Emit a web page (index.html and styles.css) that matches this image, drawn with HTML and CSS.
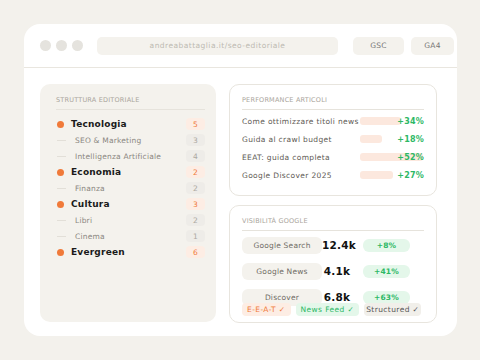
FILE: index.html
```html
<!DOCTYPE html>
<html>
<head>
<meta charset="utf-8">
<link rel="stylesheet" href="styles.css">
</head>
<body>
<div class="window">
  <div class="topbar">
    <div class="dots"><span class="dot"></span><span class="dot"></span><span class="dot"></span></div>
    <div class="url">andreabattaglia.it/seo-editoriale</div>
    <div class="btn btn-gsc">GSC</div>
    <div class="btn btn-ga4">GA4</div>
  </div>
  <div class="content">
    <div class="panel-left">
      <div class="label">STRUTTURA EDITORIALE</div>
      <div class="tree">
        <div class="row main"><span class="bullet"></span><span class="name">Tecnologia</span><span class="count hot">5</span></div>
        <div class="row sub"><span class="dash"></span><span class="name">SEO &amp; Marketing</span><span class="count">3</span></div>
        <div class="row sub"><span class="dash"></span><span class="name">Intelligenza Artificiale</span><span class="count">4</span></div>
        <div class="row main"><span class="bullet"></span><span class="name">Economia</span><span class="count hot">2</span></div>
        <div class="row sub"><span class="dash"></span><span class="name">Finanza</span><span class="count">2</span></div>
        <div class="row main"><span class="bullet"></span><span class="name">Cultura</span><span class="count hot">3</span></div>
        <div class="row sub"><span class="dash"></span><span class="name">Libri</span><span class="count">2</span></div>
        <div class="row sub"><span class="dash"></span><span class="name">Cinema</span><span class="count">1</span></div>
        <div class="row main"><span class="bullet"></span><span class="name">Evergreen</span><span class="count hot">6</span></div>
      </div>
    </div>
    <div class="col-right">
      <div class="card card-perf">
        <div class="label">PERFORMANCE ARTICOLI</div>
        <div class="perf-row"><span class="ptitle">Come ottimizzare titoli news</span><span class="bar" style="width:41px"></span><span class="pct">+34%</span></div>
        <div class="perf-row"><span class="ptitle">Guida al crawl budget</span><span class="bar" style="width:22px"></span><span class="pct">+18%</span></div>
        <div class="perf-row"><span class="ptitle">EEAT: guida completa</span><span class="bar" style="width:63px"></span><span class="pct">+52%</span></div>
        <div class="perf-row"><span class="ptitle">Google Discover 2025</span><span class="bar" style="width:33px"></span><span class="pct">+27%</span></div>
      </div>
      <div class="card card-vis">
        <div class="label">VISIBILITÀ GOOGLE</div>
        <div class="vis-row"><span class="source">Google Search</span><span class="value">12.4k</span><span class="delta">+8%</span></div>
        <div class="vis-row"><span class="source">Google News</span><span class="value">4.1k</span><span class="delta">+41%</span></div>
        <div class="vis-row"><span class="source">Discover</span><span class="value">6.8k</span><span class="delta">+63%</span></div>
        <div class="tags">
          <span class="tag tag-orange">E-E-A-T ✓</span>
          <span class="tag tag-green">News Feed ✓</span>
          <span class="tag tag-gray">Structured ✓</span>
        </div>
      </div>
    </div>
  </div>
</div>
</body>
</html>
```

FILE: styles.css
```css
* { box-sizing: border-box; }
html, body { margin: 0; }
body {
  background: #f3f1ec;
  padding: 24px;
  font-family: "DejaVu Sans", sans-serif;
  width: 480px;
  height: 360px;
  letter-spacing: 0.2px;
}
.window {
  width: 433px;
  height: 312px;
  background: #ffffff;
  border-radius: 16px;
  overflow: hidden;
}
.topbar {
  height: 44px;
  border-bottom: 1px solid #e9e6df;
  display: flex;
  align-items: center;
  padding: 0 0 0 16px;
}
.dots { display: flex; gap: 5px; }
.dot {
  width: 11px;
  height: 11px;
  border-radius: 50%;
  background: #e5e3de;
}
.url {
  margin-left: 14px;
  width: 241px;
  height: 18px;
  border-radius: 5px;
  background: #f4f2ed;
  color: #bdbab2;
  font-size: 7.5px;
  letter-spacing: 0.45px;
  display: flex;
  align-items: center;
  justify-content: center;
}
.btn {
  height: 18px;
  border-radius: 5px;
  background: #f4f2ed;
  color: #777;
  font-size: 7.5px;
  display: flex;
  align-items: center;
  justify-content: center;
}
.btn-gsc { margin-left: 15px; width: 51px; }
.btn-ga4 { margin-left: 7px; width: 43px; }

.content {
  display: flex;
  gap: 13px;
  padding: 16px 0 0 16px;
}
.panel-left {
  width: 176px;
  height: 238px;
  background: #f4f2ed;
  border-radius: 10px;
  padding: 12px 11px 0 16px;
}
.label {
  font-size: 6.5px;
  color: #aaa59c;
  letter-spacing: 0.2px;
  padding-bottom: 5px;
  border-bottom: 1px solid #e6e3dc;
}
.tree { padding-top: 6px; }
.row {
  display: flex;
  align-items: center;
  height: 16px;
}
.bullet {
  width: 7px;
  height: 7px;
  border-radius: 50%;
  background: #f07a3a;
  margin: 0 7px 0 1px;
}
.dash {
  width: 9px;
  height: 1px;
  background: #e2dfd8;
  margin: 0 9px 0 1px;
}
.row.main .name {
  font-weight: bold;
  font-size: 9px;
  color: #1a1a1a;
}
.row.sub .name {
  font-size: 7.5px;
  color: #8a867f;
}
.count {
  margin-left: auto;
  width: 19px;
  height: 12px;
  border-radius: 4px;
  background: #eeece8;
  color: #aca8a1;
  font-size: 7.5px;
  display: flex;
  align-items: center;
  justify-content: center;
}
.count.hot {
  background: #fdede4;
  color: #f07a3a;
}

.col-right {
  width: 208px;
  display: flex;
  flex-direction: column;
  gap: 9px;
}
.card {
  background: #fff;
  border: 1px solid #e8e5de;
  border-radius: 10px;
  padding: 11px 12px 0 12px;
}
.card-perf { height: 112px; }
.card-vis { height: 118px; }
.card .label { margin-bottom: 2px; }
.perf-row {
  display: flex;
  align-items: center;
  height: 18px;
  position: relative;
}
.ptitle {
  font-size: 7.5px;
  color: #5e5a54;
  width: 118px;
  white-space: nowrap;
  letter-spacing: 0.35px;
}
.bar {
  height: 8px;
  border-radius: 3px;
  background: #fce8de;
}
.pct {
  position: absolute;
  right: 0;
  font-size: 8px;
  font-weight: bold;
  color: #2db865;
}

.card-vis .label { margin-bottom: 1px; }
.vis-row {
  display: flex;
  align-items: center;
  height: 26px;
}
.source {
  width: 80px;
  height: 17px;
  border-radius: 6px;
  background: #f4f2ed;
  color: #6f6b64;
  font-size: 7.5px;
  display: flex;
  align-items: center;
  justify-content: center;
}
.value {
  width: 30px;
  text-align: center;
  font-size: 10.5px;
  font-weight: bold;
  color: #111;
}
.delta {
  margin-left: 11px;
  width: 47px;
  height: 13px;
  border-radius: 6px;
  background: #e4f7ea;
  color: #2db865;
  font-size: 7.5px;
  font-weight: bold;
  display: flex;
  align-items: center;
  justify-content: center;
}
.tags {
  display: flex;
  gap: 5px;
  margin-top: -7px;
  position: relative;
}
.tag {
  height: 13px;
  border-radius: 4px;
  font-size: 7.5px;
  letter-spacing: 0.4px;
  display: flex;
  align-items: center;
  padding: 0 5px;
}
.tag-orange { background: #fdede4; color: #f07a3a; }
.tag-green { background: #e4f7ea; color: #2db865; }
.tag-gray { background: #f1efea; color: #555; padding: 0 2px; }
```
